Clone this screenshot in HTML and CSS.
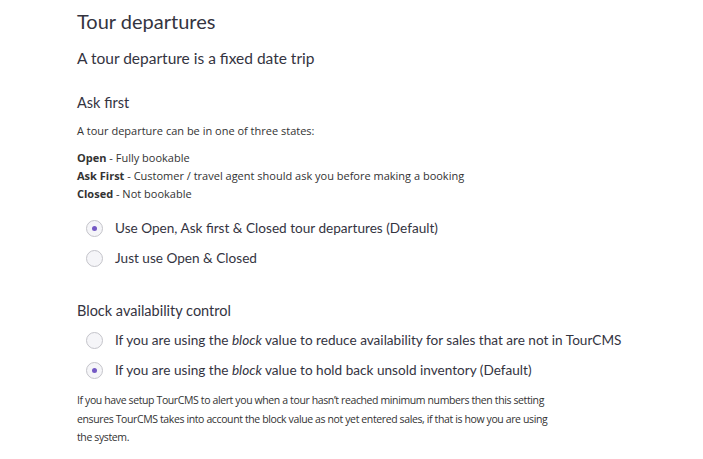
FILE: index.html
```html
<!DOCTYPE html>
<html lang="en">
<head>
    <meta charset="UTF-8">
    <meta name="viewport" content="width=device-width, initial-scale=1.0">
    <title>Tour departures</title>
    <link rel="stylesheet" href="styles.css">
</head>
<body>
    <div class="page">
        <h1>Tour departures</h1>
        <h2 class="lead">A tour departure is a fixed date trip</h2>

        <h3>Ask first</h3>
        <p class="intro">A tour departure can be in one of three states:</p>
        <div class="states">
            <div><strong>Open</strong> - Fully bookable</div>
            <div><strong>Ask First</strong> - Customer / travel agent should ask you before making a booking</div>
            <div><strong>Closed</strong> - Not bookable</div>
        </div>

        <div class="options">
            <label class="option"><span class="radio checked"></span>Use Open, Ask first &amp; Closed tour departures (Default)</label>
            <label class="option"><span class="radio"></span>Just use Open &amp; Closed</label>
        </div>

        <h3 class="block-title">Block availability control</h3>
        <div class="options tight">
            <label class="option"><span class="radio"></span>If you are using the&nbsp;<em>block</em>&nbsp;value to reduce availability for sales that are not in TourCMS</label>
            <label class="option"><span class="radio checked"></span>If you are using the&nbsp;<em>block</em>&nbsp;value to hold back unsold inventory (Default)</label>
        </div>
        <p class="help">If you have setup TourCMS to alert you when a tour hasn’t reached minimum numbers then this setting ensures TourCMS takes into account the block value as not yet entered sales, if that is how you are using the system.</p>
    </div>
</body>
</html>
```

FILE: styles.css
```css
body {
    margin: 0;
    font-family: Lato, 'Open Sans', sans-serif;
    color: #34343f;
    background: #fff;
}
.page {
    padding: 7px 0 0 77px;
    width: 485px;
}
h1 {
    font-size: 20px;
    font-weight: 400;
    line-height: 28px;
    margin: 0;
}
.lead {
    font-size: 15.5px;
    font-weight: 400;
    line-height: 22px;
    margin: 12px 0 0;
}
h3 {
    font-size: 14.5px;
    font-weight: 400;
    line-height: 20px;
    margin: 24px 0 0;
}
.intro, .states, .help {
    font-family: 'Open Sans', sans-serif;
    font-size: 11px;
    color: #333;
}
.intro {
    line-height: 18px;
    margin: 9px 0 0;
}
.states {
    line-height: 18px;
    margin-top: 9px;
}
.states strong {
    font-weight: 700;
}
.options {
    margin-top: 10px;
}
.options.tight {
    margin-top: 4px;
}
.option {
    display: flex;
    align-items: center;
    height: 30px;
    padding-left: 9px;
    font-size: 13.6px;
    white-space: nowrap;
}
.radio {
    width: 15px;
    height: 15px;
    border: 1px solid #c4c4ca;
    border-radius: 50%;
    background: #f5f5f8;
    margin-right: 12px;
    display: flex;
    align-items: center;
    justify-content: center;
    flex-shrink: 0;
}
.radio.checked::after {
    content: "";
    width: 5px;
    height: 5px;
    border-radius: 50%;
    background: #7459c4;
}
.block-title {
    margin-top: 28px;
}
.help {
    font-size: 10.5px;
    line-height: 18.5px;
    margin: 6px 0 0;
    letter-spacing: -0.38px;
    width: 478px;
}
```
